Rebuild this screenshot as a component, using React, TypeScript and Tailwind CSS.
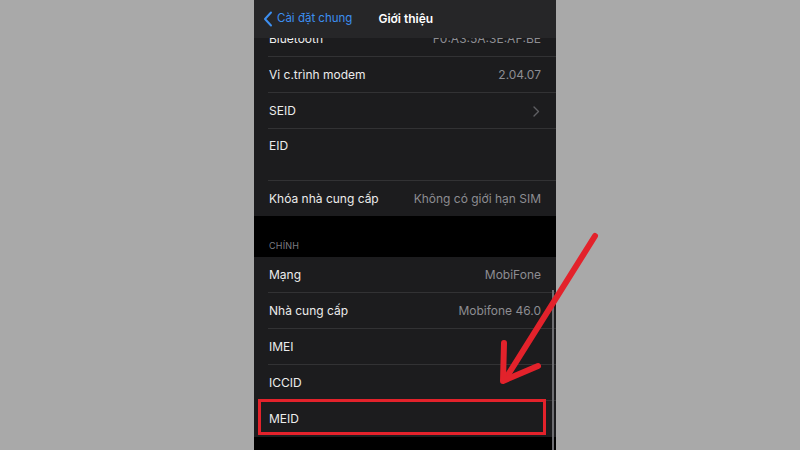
import React from "react";

const font = { fontFamily: "Inter, 'Noto Sans', sans-serif" };

function Row({ label, value, chevron, sep = true, h = "h-[36px]" }: { label: string; value?: string; chevron?: boolean; sep?: boolean; h?: string }) {
  return (
    <div className={`relative flex ${h} items-center pl-[15px] pr-[15px] bg-[#1c1c1e]`}>
      <span className="text-[12px] text-[#ececec]">{label}</span>
      <span className="ml-auto text-[12px] text-[#8d8d92]">{value}</span>
      {chevron && (
        <svg width="7" height="11" viewBox="0 0 7 11" className="ml-auto mr-[1px]">
          <path d="M1 1 L5.5 5.5 L1 10" stroke="#5f5f63" strokeWidth="1.4" fill="none" strokeLinecap="round" strokeLinejoin="round" />
        </svg>
      )}
      {sep && <div className="absolute bottom-0 left-[14px] right-0 h-px bg-[#323234]" />}
    </div>
  );
}

export default function App() {
  return (
    <div className="relative w-[800px] h-[450px] bg-[#a9a9a9] overflow-hidden flex" style={font}>
      <div className="relative w-[302px] h-[450px] ml-[254px] bg-black flex flex-col">
        {/* nav bar */}
        <div className="h-[38px] bg-[#262628] flex items-center pl-[9px] shrink-0">
          <svg width="10" height="16" viewBox="0 0 10 16">
            <path d="M8 1.5 L2 8 L8 14.5" stroke="#3d8ff0" strokeWidth="2" fill="none" strokeLinecap="round" strokeLinejoin="round" />
          </svg>
          <span className="ml-[4px] text-[11.5px] text-[#3d8ff0]">Cài đặt chung</span>
          <span className="ml-[26px] text-[12px] font-semibold text-white">Giới thiệu</span>
        </div>
        {/* partial bluetooth row */}
        <div className="h-[19px] overflow-hidden flex flex-col justify-end shrink-0">
          <div className="shrink-0">
            <Row label="Bluetooth" value="F0:A3:5A:3E:AF:BE" />
          </div>
        </div>
        <Row label="Vi c.trình modem" value="2.04.07" />
        <Row label="SEID" chevron />
        <div className="relative h-[52px] bg-[#1c1c1e] flex items-start pl-[15px] pt-[8px]">
          <span className="text-[12px] text-[#ececec]">EID</span>
          <div className="absolute bottom-0 left-[14px] right-0 h-px bg-[#323234]" />
        </div>
        <Row label="Khóa nhà cung cấp" value="Không có giới hạn SIM" sep={false} h="h-[35px]" />
        <div className="h-[41px] flex items-end pl-[15px] pb-[5px]">
          <span className="text-[9px] text-[#7d7d82] tracking-[0.2px]">CHÍNH</span>
        </div>
        <Row label="Mạng" value="MobiFone" />
        <Row label="Nhà cung cấp" value="Mobifone 46.0" />
        <Row label="IMEI" />
        <Row label="ICCID" />
        <Row label="MEID" sep={false} />
        {/* scroll indicator */}
        <div className="absolute right-[2px] top-[290px] bottom-0 w-[2px] bg-[#6e6e72]" />
        {/* red highlight box */}
        <div className="absolute left-[4px] top-[399px] w-[288px] h-[36px] border-[3px] border-[#e3222b]" />
      </div>
      {/* arrow */}
      <svg className="absolute left-0 top-0" width="800" height="450" viewBox="0 0 800 450">
        <path d="M595 236 L506 378" stroke="#e3222b" strokeWidth="6" fill="none" strokeLinecap="round" />
        <path d="M504 343 L503 381 L538 366" stroke="#e3222b" strokeWidth="6" fill="none" strokeLinecap="round" strokeLinejoin="round" />
      </svg>
    </div>
  );
}
